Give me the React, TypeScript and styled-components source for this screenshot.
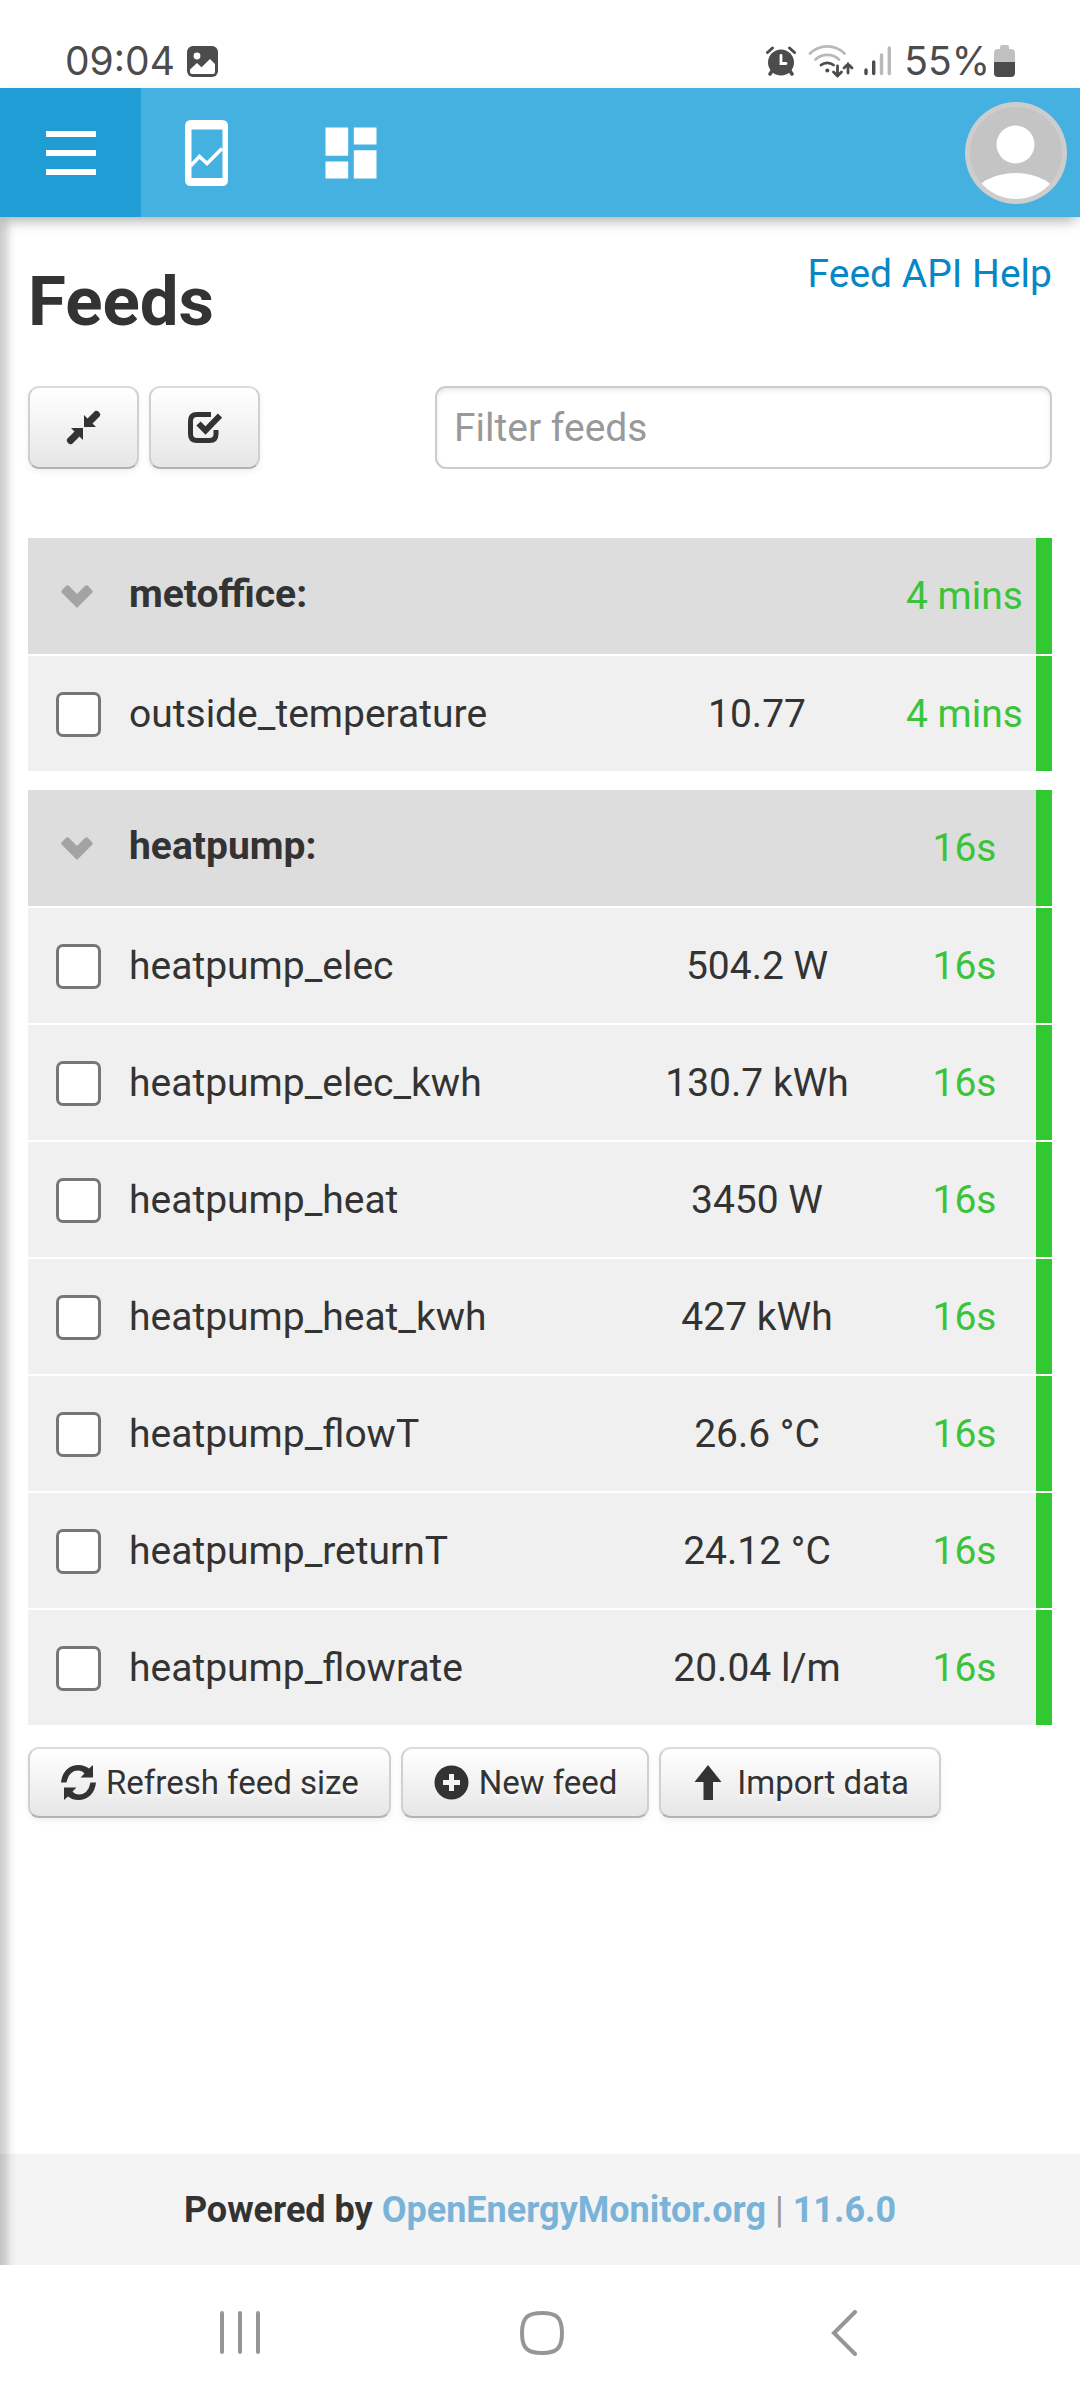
import React, { useState } from "react";
import styled, { createGlobalStyle } from "styled-components";
import { MdDashboard } from "react-icons/md";

const GlobalStyle = createGlobalStyle`
  *, *::before, *::after { box-sizing: border-box; }
  body {
    margin: 0;
    background: #fff;
    color: #333;
    font-family: Roboto, "Liberation Sans", sans-serif;
    font-size: 39px;
    line-height: 56px;
  }
`;

const Page = styled.div`
  display: flex;
  flex-direction: column;
  min-height: 100vh;
`;

const StatusBar = styled.div`
  display: flex;
  align-items: flex-end;
  justify-content: space-between;
  height: 88px;
  padding: 0 65px;
  color: #4c4c4c;
  font-family: Inter, Roboto, sans-serif;
`;

const StatusGroup = styled.div<{ $gap: number }>`
  display: flex;
  align-items: center;
  gap: ${(p) => p.$gap}px;
`;

const StatusText = styled.span`
  font-size: 39px;
  line-height: 54px;
`;

const TopBar = styled.header`
  position: relative;
  z-index: 1;
  display: flex;
  align-items: center;
  height: 129px;
  padding-right: 13px;
  background: #45b1e1;
  box-shadow: 0 6px 14px -4px rgba(0, 0, 0, 0.4);
`;

const BarButton = styled.button<{ $active?: boolean }>`
  display: flex;
  align-items: center;
  justify-content: center;
  width: ${(p) => (p.$active ? 141 : 130)}px;
  height: 100%;
  margin-right: ${(p) => (p.$active ? 0 : 15)}px;
  padding: 0;
  border: 0;
  background: ${(p) => (p.$active ? "#209dd4" : "transparent")};
  color: #fff;
`;

const AvatarButton = styled.button`
  display: flex;
  width: 102px;
  height: 102px;
  margin-left: auto;
  padding: 0;
  border: 0;
  border-radius: 50%;
  background: none;
`;

const Body = styled.div`
  position: relative;
  display: flex;
  flex: 1;
  flex-direction: column;

  &::before {
    content: "";
    position: absolute;
    inset: 0 auto 0 0;
    width: 17px;
    background: linear-gradient(
      to right,
      rgba(0, 0, 0, 0.2),
      rgba(0, 0, 0, 0.15) 30%,
      rgba(0, 0, 0, 0.03) 70%,
      transparent
    );
  }
`;

const Main = styled.main`
  flex: 1;
  padding: 29px 28px 0;
`;

const TitleRow = styled.div`
  display: flex;
  align-items: flex-start;
  justify-content: space-between;
`;

const Title = styled.h2`
  margin: 0;
  padding-top: 14px;
  font-size: 69px;
  line-height: 84px;
`;

const HelpLink = styled.a`
  color: #0787c6;
  text-decoration: none;
`;

const Toolbar = styled.div`
  display: flex;
  justify-content: space-between;
  margin: 42px 0 67px;
`;

const ButtonGroup = styled.div`
  display: flex;
  gap: 10px;
`;

const Actions = styled(ButtonGroup)`
  padding-top: 5px;
`;

const Button = styled.button`
  display: flex;
  align-items: center;
  gap: 10px;
  height: 71px;
  padding: 0 30px 0 31px;
  border: 2px solid #d0d0d0;
  border-top-color: #dcdcdc;
  border-bottom-color: #b3b3b3;
  border-radius: 11px;
  background: linear-gradient(#fff, #e6e6e6);
  box-shadow: 0 3px 6px rgba(0, 0, 0, 0.06);
  color: #333;
  font-family: inherit;
  font-size: 33px;
  line-height: 56px;
  text-shadow: 0 3px 3px rgba(255, 255, 255, 0.75);
`;

const IconButton = styled(Button)`
  justify-content: center;
  width: 111px;
  height: 83px;
  padding: 0;
`;

const FilterInput = styled.input`
  width: 617px;
  height: 83px;
  padding: 0 17px;
  border: 2px solid #ccc;
  border-radius: 11px;
  background: #fff;
  box-shadow: inset 0 3px 4px rgba(0, 0, 0, 0.08);
  color: #555;
  font: inherit;

  &::placeholder {
    color: #999;
    opacity: 1;
  }
`;

const FeedTable = styled.table`
  width: 100%;
  margin-bottom: 15px;
  border-spacing: 0 2px;
  table-layout: fixed;
`;

const SelectCol = styled.col`
  width: 101px;
`;

const ValueCol = styled.col`
  width: 272px;
`;

const TimeCol = styled.col`
  width: 159px;
`;

const FeedRow = styled.tr<{ $heading?: boolean }>`
  height: ${(p) => (p.$heading ? 116 : 115)}px;
  background: ${(p) => (p.$heading ? "#ddd" : "#f0f0f0")};
`;

const Cell = styled.td`
  padding: 0;
  white-space: nowrap;
`;

const SelectCell = styled(Cell)`
  padding-left: 28px;
`;

const GroupName = styled.th`
  padding: 0 0 4px;
  text-align: left;
`;

const ValueCell = styled(Cell)`
  text-align: center;
`;

const TimeCell = styled(Cell)`
  border-right: 16px solid #32c832;
  color: #3bc43b;
  text-align: center;
`;

const ToggleButton = styled.button`
  display: flex;
  padding: 0 5px;
  border: 0;
  background: none;
  color: #a3a3a3;
`;

const Checkbox = styled.input`
  display: block;
  appearance: none;
  width: 45px;
  height: 45px;
  margin: 2px 0 0;
  border: 3px solid #767676;
  border-radius: 7px;
  background: #fff;

  &:checked {
    background: #0787c6;
  }
`;

const Footer = styled.footer`
  height: 111px;
  background: #f4f4f4;
  color: #999;
  font-size: 36px;
  line-height: 112px;
  text-align: center;

  strong {
    color: #333;
  }
`;

const FooterLink = styled.a`
  color: #7ab3d8;
  font-weight: bold;
  text-decoration: none;
`;

const SystemNav = styled.nav`
  display: grid;
  grid-template-columns: repeat(3, 1fr);
  height: 135px;
  padding: 0 85px 0 89px;
`;

const NavButton = styled.button`
  display: flex;
  align-items: center;
  justify-content: center;
  border: 0;
  background: none;
  color: #969696;
`;

const PhotoIcon = () => (
  <svg width="31" height="31" viewBox="0 0 31 31">
    <rect width="31" height="31" rx="6" fill="#4c4c4c" />
    <circle cx="10" cy="10" r="3.4" fill="#fff" />
    <path d="M3 23.5 10 17l4.500 4.200L23 13l5 5v8a2 2 0 0 1-2 2H5a2 2 0 0 1-2-2z" fill="#fff" />
  </svg>
);

const AlarmIcon = () => (
  <svg width="30" height="30" viewBox="0 0 30 30" fill="none" stroke="#4c4c4c" strokeLinecap="round">
    <circle cx="15" cy="16.500" r="13" fill="#4c4c4c" stroke="none" />
    <path d="M1.500 6.500 6.500 2M28.500 6.500 23.500 2" strokeWidth="3" />
    <path d="m6 25-2 3m20-3 2 3" strokeWidth="3.500" />
    <path d="M15 9.500v8h5" stroke="#fff" strokeWidth="2.800" />
  </svg>
);

const WifiIcon = () => (
  <svg width="46" height="34" viewBox="0 0 46 34" fill="none" strokeWidth="2.800" strokeLinecap="round">
    <path d="M2 9.500a24.500 24.500 0 0 1 34.500 0M7.500 15.500a17 17 0 0 1 23.500 0" stroke="#b9b9b9" />
    <path d="M13 21a10 10 0 0 1 12.500 0" stroke="#4c4c4c" />
    <circle cx="19.300" cy="26.500" r="2" fill="#4c4c4c" />
    <path d="M29.500 22v10m-4-4 4 4 4-4M40 29V20m-4 4 4-4 4 4" stroke="#4c4c4c" />
  </svg>
);

const SignalIcon = () => (
  <svg width="28" height="30" viewBox="0 0 28 30" strokeWidth="3.400" strokeLinecap="round">
    <path d="M2 24v3.500M9.700 16v11.500" stroke="#4c4c4c" />
    <path d="M17.500 9v18.500M25.300 2v25.500" stroke="#b9b9b9" />
  </svg>
);

const BatteryIcon = () => (
  <svg width="21" height="32" viewBox="0 0 21 32">
    <path d="M6 4V2q0-2 2-2h5q2 0 2 2v2h2q4 0 4 4v9H0V8q0-4 4-4z" fill="#c1c1c1" />
    <path d="M0 17h21v11q0 4-4 4H4q-4 0-4-4z" fill="#4c4c4c" />
  </svg>
);

const MenuIcon = () => (
  <svg width="50" height="44" viewBox="0 0 50 44" fill="currentColor">
    <path d="M0 0h50v6H0zM0 19h50v6H0zM0 38h50v6H0z" />
  </svg>
);

const GraphPhoneIcon = () => (
  <svg width="43" height="66" viewBox="0 0 43 66">
    <path
      fillRule="evenodd"
      d="M6 0h31q6 0 6 6v54q0 6-6 6H6q-6 0-6-6V6q0-6 6-6zM6.500 9.500v48.500h31V9.500z"
      fill="currentColor"
    />
    <path d="M5.500 46 14.500 36.500 22 43.500 37 28.500" fill="none" stroke="currentColor" strokeWidth="3.600" />
  </svg>
);

const AvatarIcon = () => (
  <svg width="102" height="102" viewBox="0 0 102 102">
    <clipPath id="avatar-disc">
      <circle cx="51" cy="51" r="46" />
    </clipPath>
    <circle cx="51" cy="51" r="51" fill="#cdcdcd" />
    <circle cx="51" cy="51" r="46" fill="#c4c4c4" />
    <circle cx="50.500" cy="42.500" r="19" fill="#fff" />
    <ellipse cx="50.500" cy="96" rx="42" ry="25" fill="#fff" clipPath="url(#avatar-disc)" />
  </svg>
);

const CollapseIcon = () => (
  <svg width="35" height="35" viewBox="0 0 35 35" fill="#333">
    <path d="M18 17V5l3.500 3.500L29 1q2-1 4 1t1 4l-7.500 7.500L30 17zM17 18v12l-3.500-3.500L6 34q-2 1-4-1t-1-4l7.500-7.500L5 18z" />
  </svg>
);

const CheckIcon = () => (
  <svg width="35" height="35" viewBox="0 0 35 35" fill="none" stroke="#333">
    <path d="M24 4.500H10q-6.500 0-6.500 6.500v13q0 6.500 6.500 6.500h12.500q6.500 0 6.500-6.500V20" strokeWidth="5" />
    <path d="m11.500 13.500 7 7L33 5.500" strokeWidth="6" />
  </svg>
);

const ChevronIcon = () => (
  <svg width="32" height="23" viewBox="0 0 32 23" fill="currentColor">
    <path d="M16 23 .800 7.800q-1-1.300 0-2.600L5.200.800q1.300-1 2.600 0L16 9 24.200.800q1.300-1 2.600 0l4.400 4.400q1 1.300 0 2.600z" />
  </svg>
);

const RefreshIcon = () => (
  <svg width="35" height="35" viewBox="0 0 35 35" fill="#333">
    <path d="M0 17.500C1 7 8 0 17.500 0q6 0 10.500 3.500L32 0v12.500H19.500l4-4Q21 5.500 17 5.500 8 5.500 5.500 17.500z" />
    <path d="M35 17.500C34 28 27 35 17.500 35q-6 0-10.500-3.500L3 35V22.500h12.500l-4 4q2.500 3 6.500 3 9 0 11.500-12z" />
  </svg>
);

const PlusIcon = () => (
  <svg width="35" height="35" viewBox="0 0 35 35">
    <circle cx="17.500" cy="17.500" r="17" fill="#333" />
    <path d="M17.500 9v17M9 17.500h17" stroke="#f4f4f4" strokeWidth="5" />
  </svg>
);

const UpIcon = () => (
  <svg width="35" height="35" viewBox="0 0 35 35" fill="#333">
    <path d="m16 0 13.500 17H21v18h-9.500V17H2.500z" />
  </svg>
);

const RecentsIcon = () => (
  <svg width="40" height="43" viewBox="0 0 40 43" stroke="currentColor" strokeWidth="4" strokeLinecap="round">
    <path d="M2 2v39M20 2v39M38 2v39" />
  </svg>
);

const HomeIcon = () => (
  <svg width="44" height="44" viewBox="0 0 44 44" fill="none" stroke="currentColor" strokeWidth="4">
    <path d="M22 2C8 2 2 6 2 22s6 20 20 20 20-4 20-20S36 2 22 2z" />
  </svg>
);

const BackIcon = () => (
  <svg width="26" height="46" viewBox="0 0 26 46" fill="none" stroke="currentColor" strokeWidth="4" strokeLinecap="round">
    <path d="M24 2 3 23l21 21" />
  </svg>
);

type Feed = { name: string; value: string; updated: string };
type Group = { name: string; updated: string; feeds: Feed[] };

const groups: Group[] = [
  {
    name: "metoffice",
    updated: "4 mins",
    feeds: [{ name: "outside_temperature", value: "10.77", updated: "4 mins" }],
  },
  {
    name: "heatpump",
    updated: "16s",
    feeds: [
      { name: "heatpump_elec", value: "504.2 W", updated: "16s" },
      { name: "heatpump_elec_kwh", value: "130.7 kWh", updated: "16s" },
      { name: "heatpump_heat", value: "3450 W", updated: "16s" },
      { name: "heatpump_heat_kwh", value: "427 kWh", updated: "16s" },
      { name: "heatpump_flowT", value: "26.6 °C", updated: "16s" },
      { name: "heatpump_returnT", value: "24.12 °C", updated: "16s" },
      { name: "heatpump_flowrate", value: "20.04 l/m", updated: "16s" },
    ],
  },
];

function FeedGroup({ group, filter }: { group: Group; filter: string }) {
  const [open, setOpen] = useState(true);
  const feeds = group.feeds.filter((feed) => feed.name.includes(filter));

  return (
    <FeedTable>
      <colgroup>
        <SelectCol />
        <col />
        <ValueCol />
        <TimeCol />
      </colgroup>
      <tbody>
        <FeedRow $heading>
          <SelectCell>
            <ToggleButton aria-label={`Toggle ${group.name}`} aria-expanded={open} onClick={() => setOpen(!open)}>
              <ChevronIcon />
            </ToggleButton>
          </SelectCell>
          <GroupName scope="rowgroup" colSpan={2}>
            {group.name}:
          </GroupName>
          <TimeCell>{group.updated}</TimeCell>
        </FeedRow>
        {open &&
          feeds.map((feed) => (
            <FeedRow key={feed.name}>
              <SelectCell>
                <Checkbox type="checkbox" id={feed.name} />
              </SelectCell>
              <Cell>
                <label htmlFor={feed.name}>{feed.name}</label>
              </Cell>
              <ValueCell>{feed.value}</ValueCell>
              <TimeCell>{feed.updated}</TimeCell>
            </FeedRow>
          ))}
      </tbody>
    </FeedTable>
  );
}

export default function App() {
  const [filter, setFilter] = useState("");

  return (
    <Page>
      <GlobalStyle />
      <StatusBar>
        <StatusGroup $gap={12}>
          <StatusText>09:04</StatusText>
          <PhotoIcon />
        </StatusGroup>
        <StatusGroup $gap={12}>
          <AlarmIcon />
          <StatusGroup $gap={10}>
            <WifiIcon />
            <SignalIcon />
          </StatusGroup>
          <StatusGroup $gap={4}>
            <StatusText>55%</StatusText>
            <BatteryIcon />
          </StatusGroup>
        </StatusGroup>
      </StatusBar>
      <TopBar>
        <BarButton $active aria-label="Menu">
          <MenuIcon />
        </BarButton>
        <BarButton aria-label="Graphs">
          <GraphPhoneIcon />
        </BarButton>
        <BarButton aria-label="Dashboards">
          <MdDashboard size={68} />
        </BarButton>
        <AvatarButton aria-label="Account">
          <AvatarIcon />
        </AvatarButton>
      </TopBar>
      <Body>
        <Main>
          <TitleRow>
            <Title>Feeds</Title>
            <HelpLink href="#api">Feed API Help</HelpLink>
          </TitleRow>
          <Toolbar>
            <ButtonGroup>
              <IconButton aria-label="Collapse all">
                <CollapseIcon />
              </IconButton>
              <IconButton aria-label="Select all">
                <CheckIcon />
              </IconButton>
            </ButtonGroup>
            <FilterInput
              aria-label="Filter feeds"
              placeholder="Filter feeds"
              value={filter}
              onChange={(e) => setFilter(e.target.value)}
            />
          </Toolbar>
          {groups.map((group) => (
            <FeedGroup key={group.name} group={group} filter={filter} />
          ))}
          <Actions>
            <Button>
              <RefreshIcon />
              Refresh feed size
            </Button>
            <Button>
              <PlusIcon />
              New feed
            </Button>
            <Button>
              <UpIcon />
              Import data
            </Button>
          </Actions>
        </Main>
        <Footer>
          <strong>Powered by</strong> <FooterLink href="#oem">OpenEnergyMonitor.org</FooterLink> |{" "}
          <FooterLink href="#version">11.6.0</FooterLink>
        </Footer>
      </Body>
      <SystemNav>
        <NavButton aria-label="Recent apps">
          <RecentsIcon />
        </NavButton>
        <NavButton aria-label="Home">
          <HomeIcon />
        </NavButton>
        <NavButton aria-label="Back">
          <BackIcon />
        </NavButton>
      </SystemNav>
    </Page>
  );
}
